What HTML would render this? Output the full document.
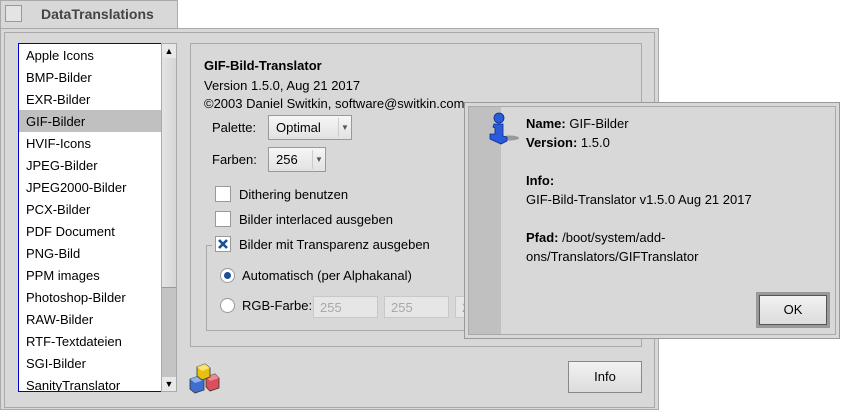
<!DOCTYPE html>
<html><head><meta charset="utf-8"><style>
*{margin:0;padding:0;box-sizing:border-box}
body{width:842px;height:410px;background:#fff;position:relative;overflow:hidden;font-family:"Liberation Sans","DejaVu Sans",sans-serif;font-size:13px;color:#000}
.a{position:absolute}
.t{position:absolute;white-space:nowrap;line-height:16px}
.btn{position:absolute;border:1px solid #888;background:linear-gradient(#f2f2f2,#dcdcdc);text-align:center;font-size:13px}
.cb{position:absolute;width:16px;height:16px;border:1px solid #999;background:#fff}
.rb{position:absolute;width:15px;height:15px;border:1px solid #999;border-radius:50%;background:#fff}
.tf{position:absolute;height:22px;border:1px solid #c8c8c8;background:#e6e6e6;color:#a8a8a8;padding:3px 0 0 6px;line-height:16px}
.menu{position:absolute;height:25px;border:1px solid #999;background:linear-gradient(#f6f6f6,#e2e2e2);padding:4px 0 0 7px}
.menu i{position:absolute;right:0;top:2px;width:13px;height:19px;border-left:1px solid #ccc;font-style:normal;font-size:8px;text-align:center;line-height:19px;color:#555}
</style></head><body>
<div class="a" style="left:0;top:0;width:178px;height:29px;background:#d8d8d8;border:1px solid #aaa;border-bottom:none"></div>
<div class="a" style="left:5px;top:5px;width:17px;height:17px;border:1px solid #999;background:#e4e4e4"></div>
<div class="t" style="left:41px;top:6px;font-weight:bold;color:#444;font-size:14px">DataTranslations</div>
<div class="a" style="left:0;top:28px;width:659px;height:382px;background:#d8d8d8;border:1px solid #aaa"></div>
<div class="a" style="left:4px;top:32px;width:651px;height:376px;border:1px solid #aaa"></div>
<div class="a" style="left:18px;top:43px;width:144px;height:349px;background:#fff;border:1px solid #0000cc;overflow:hidden">
<div class="a" style="left:0;top:66px;width:142px;height:22px;background:#c0c0c0"></div>
<div class="t" style="left:7px;top:1px;line-height:22px">Apple Icons<br>BMP-Bilder<br>EXR-Bilder<br>GIF-Bilder<br>HVIF-Icons<br>JPEG-Bilder<br>JPEG2000-Bilder<br>PCX-Bilder<br>PDF Document<br>PNG-Bild<br>PPM images<br>Photoshop-Bilder<br>RAW-Bilder<br>RTF-Textdateien<br>SGI-Bilder<br>SanityTranslator</div>
</div>
<div class="a" style="left:161px;top:43px;width:16px;height:349px;background:#c4c4c4;border:1px solid #aaa"></div>
<div class="a" style="left:162px;top:44px;width:14px;height:14px;background:#e8e8e8;font-size:9px;text-align:center;line-height:14px">&#9650;</div>
<div class="a" style="left:162px;top:58px;width:14px;height:230px;background:linear-gradient(90deg,#e4e4e4,#d6d6d6);border-bottom:1px solid #999"></div>
<div class="a" style="left:162px;top:377px;width:14px;height:14px;background:#e8e8e8;font-size:9px;text-align:center;line-height:14px">&#9660;</div>
<div class="a" style="left:190px;top:43px;width:452px;height:304px;border:1px solid #aaa"></div>
<div class="t" style="left:204px;top:58px;font-weight:bold">GIF-Bild-Translator</div>
<div class="t" style="left:204px;top:78px">Version 1.5.0, Aug 21 2017</div>
<div class="t" style="left:204px;top:96px">©2003 Daniel Switkin, software@switkin.com</div>
<div class="t" style="left:212px;top:120px">Palette:</div>
<div class="menu" style="left:268px;top:115px;width:84px">Optimal<i>&#9660;</i></div>
<div class="t" style="left:212px;top:152px">Farben:</div>
<div class="menu" style="left:268px;top:147px;width:58px">256<i>&#9660;</i></div>
<div class="cb" style="left:215px;top:186px"></div>
<div class="t" style="left:239px;top:187px">Dithering benutzen</div>
<div class="cb" style="left:215px;top:211px"></div>
<div class="t" style="left:239px;top:212px">Bilder interlaced ausgeben</div>
<div class="a" style="left:206px;top:245px;width:270px;height:86px;border:1px solid #aaa"></div>
<div class="a" style="left:212px;top:235px;width:254px;height:20px;background:#d8d8d8"></div>
<div class="cb" style="left:215px;top:236px"><svg class="a" style="left:2px;top:2px" width="10" height="10"><path d="M1,1 L9,9 M9,1 L1,9" stroke="#1a4f9a" stroke-width="2.6"/></svg></div>
<div class="t" style="left:239px;top:237px">Bilder mit Transparenz ausgeben</div>
<div class="rb" style="left:220px;top:268px"><div class="a" style="left:3px;top:3px;width:7px;height:7px;border-radius:50%;background:#1a4f9a"></div></div>
<div class="t" style="left:242px;top:268px">Automatisch (per Alphakanal)</div>
<div class="rb" style="left:220px;top:298px"></div>
<div class="t" style="left:242px;top:298px">RGB-Farbe:</div>
<div class="tf" style="left:313px;top:296px;width:65px">255</div>
<div class="tf" style="left:384px;top:296px;width:65px">255</div>
<div class="tf" style="left:455px;top:296px;width:65px">255</div>
<svg class="a" style="left:188px;top:360px" width="34" height="34" viewBox="0 0 34 34">
<polygon points="18,17 27,14 31,18 31,28 22,31 18,27" fill="#d9505a" stroke="#333" stroke-width=".8"/>
<polygon points="18,17 27,14 31,18 22,21" fill="#f08a90"/>
<polygon points="2,19 11,16 16,20 16,30 7,33 2,29" fill="#3c6fd0" stroke="#333" stroke-width=".8"/>
<polygon points="2,19 11,16 16,20 7,23" fill="#8fb0ef"/>
<polygon points="9,7 17,4 22,8 22,17 14,20 9,16" fill="#e8c010" stroke="#333" stroke-width=".8"/>
<polygon points="9,7 17,4 22,8 14,11" fill="#fbe56a"/>
</svg>
<div class="btn" style="left:568px;top:361px;width:74px;height:32px;line-height:30px">Info</div>
<div class="a" style="left:464px;top:102px;width:376px;height:237px;background:#d8d8d8;border:1px solid #999"></div>
<div class="a" style="left:468px;top:106px;width:368px;height:229px;border:1px solid #aaa"></div>
<div class="a" style="left:469px;top:107px;width:32px;height:227px;background:#c0c0c0"></div>
<svg class="a" style="left:488px;top:112px" width="34" height="36" viewBox="0 0 34 36">
<ellipse cx="22" cy="26" rx="9" ry="2.5" fill="#999"/>
<circle cx="11" cy="6" r="5" fill="#2a5bd8" stroke="#0a2a90" stroke-width=".8"/>
<path d="M6,12 L15,12 L15,24 L19,25 L19,29 L13,32 L2,27 L2,22 L7,22 L7,16 L5,15 Z" fill="#2a5bd8" stroke="#0a2a90" stroke-width=".8"/>
</svg>
<div class="t" style="left:526px;top:116px"><b>Name:</b> GIF-Bilder</div>
<div class="t" style="left:526px;top:135px"><b>Version:</b> 1.5.0</div>
<div class="t" style="left:526px;top:173px"><b>Info:</b></div>
<div class="t" style="left:526px;top:192px">GIF-Bild-Translator v1.5.0 Aug 21 2017</div>
<div class="t" style="left:526px;top:230px"><b>Pfad:</b> /boot/system/add-</div>
<div class="t" style="left:526px;top:249px">ons/Translators/GIFTranslator</div>
<div class="a" style="left:756px;top:292px;width:74px;height:36px;border:3px solid #999"></div>
<div class="btn" style="left:759px;top:295px;width:68px;height:30px;line-height:28px;border-color:#555">OK</div>
</body></html>
